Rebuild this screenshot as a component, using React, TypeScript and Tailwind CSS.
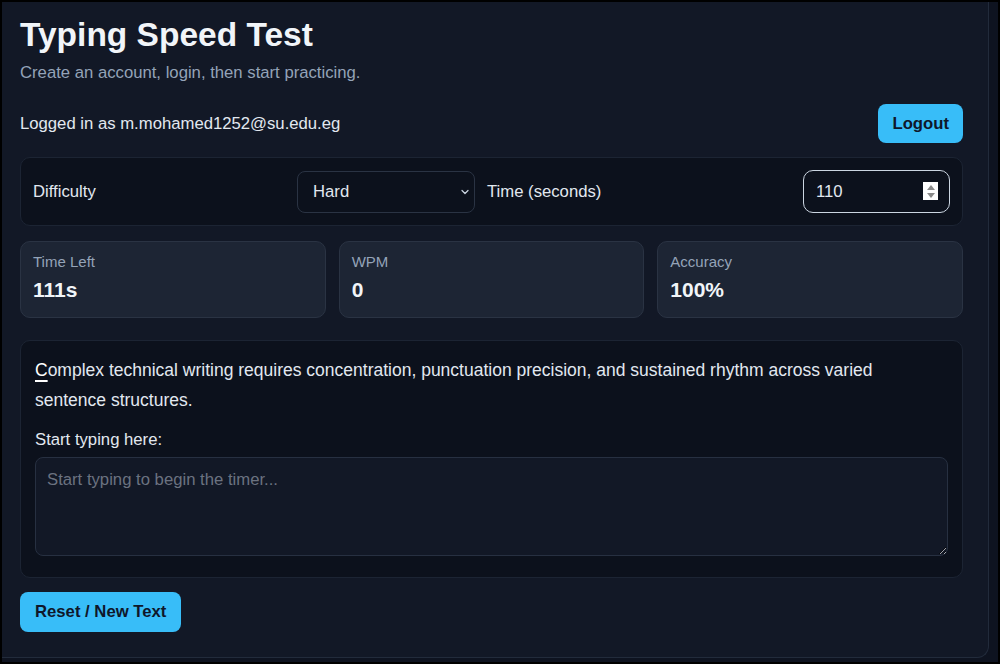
import { ChevronDown } from 'lucide-react'

const font = { fontFamily: '"Liberation Sans", Arial, sans-serif' }

function Stat({ label, value }: { label: string; value: string }) {
  return (
    <div className="h-[77px] rounded-[10px] border border-[#2a3343] bg-[#1d2534] px-3 pt-[11px]">
      <p className="text-[15px] leading-[17px] text-[#94a3b8]">{label}</p>
      <p className="mt-[8px] text-[21px] font-bold leading-[24px] text-[#f1f5f9]">{value}</p>
    </div>
  )
}

export default function App() {
  return (
    <div className="h-[664px] w-[1000px] overflow-hidden border-2 border-black bg-[#0e1320] text-[16.7px] text-[#e2e8f0]" style={font}>
      <div className="h-[656px] w-[987px] rounded-br-xl border-r border-b border-[#222b3b] bg-[#121826] pt-[13px] pr-[25px] pl-[18px]">
        <h1 className="text-[33.5px] font-bold leading-[40px] text-[#f1f5f9]">Typing Speed Test</h1>
        <p className="mt-2 leading-[19px] text-[#94a3b8]">Create an account, login, then start practicing.</p>

        <div className="mt-[22px] flex items-center justify-between">
          <span className="leading-[19px]">Logged in as m.mohamed1252@su.edu.eg</span>
          <button className="h-[39px] rounded-lg bg-[#38bdf8] px-[14px] font-bold text-[#0f172a]">Logout</button>
        </div>

        <div className="mt-[14px] grid h-[69px] grid-cols-[252px_178px_304px_1fr] items-center gap-3 rounded-[10px] border border-[#1c2433] bg-[#0c111c] px-3">
          <span>Difficulty</span>
          <div className="relative h-[42px]">
            <select
              className="h-full w-full appearance-none rounded-lg border border-[#2a3343] bg-[#0c111c] pl-[15px] text-[#e2e8f0] outline-none"
              defaultValue="hard"
              style={font}
            >
              <option value="easy">Easy</option>
              <option value="medium">Medium</option>
              <option value="hard">Hard</option>
            </select>
            <ChevronDown className="pointer-events-none absolute top-[15px] right-[4px] text-[#cbd5e1]" size={12} strokeWidth={2.5} />
          </div>
          <span>Time (seconds)</span>
          <div className="relative h-[43px]">
            <input
              className="h-full w-full rounded-[10px] border border-[#cbd5e1] bg-[#0c111c] pl-[12px] text-[#e2e8f0] outline-none"
              defaultValue="110"
              readOnly
              style={font}
            />
            <div className="pointer-events-none absolute top-[12px] right-[12px] flex h-[18px] w-[15px] flex-col items-center justify-center gap-[3px] bg-white">
              <span className="h-0 w-0 border-x-[4px] border-b-[5px] border-x-transparent border-b-[#8a8a8a]" />
              <span className="h-0 w-0 border-x-[4px] border-t-[5px] border-x-transparent border-t-[#8a8a8a]" />
            </div>
          </div>
        </div>

        <div className="mt-[15px] grid grid-cols-3 gap-[13px]">
          <Stat label="Time Left" value="111s" />
          <Stat label="WPM" value="0" />
          <Stat label="Accuracy" value="100%" />
        </div>

        <div className="mt-[22px] rounded-[10px] border border-[#1c2433] bg-[#0c111c] px-[14px] pt-[14px] pb-[21px]">
          <p className="text-[17.5px] leading-[30px] text-[#e2e8f0]">
            <span className="text-white underline decoration-2 underline-offset-[4px]">C</span>
            omplex technical writing requires concentration, punctuation precision, and sustained rhythm across varied sentence structures.
          </p>
          <p className="mt-[15px] leading-[19px]">Start typing here:</p>
          <textarea
            className="mt-2 block h-[99px] w-full rounded-lg border border-[#273041] bg-[#121826] px-[11px] pt-[9px] text-[#e2e8f0] outline-none placeholder:text-[#6b7280]"
            placeholder="Start typing to begin the timer..."
            style={font}
          />
        </div>

        <button className="mt-[14px] h-10 rounded-lg bg-[#38bdf8] px-[15px] font-bold text-[#0f172a]">Reset / New Text</button>
      </div>
    </div>
  )
}
